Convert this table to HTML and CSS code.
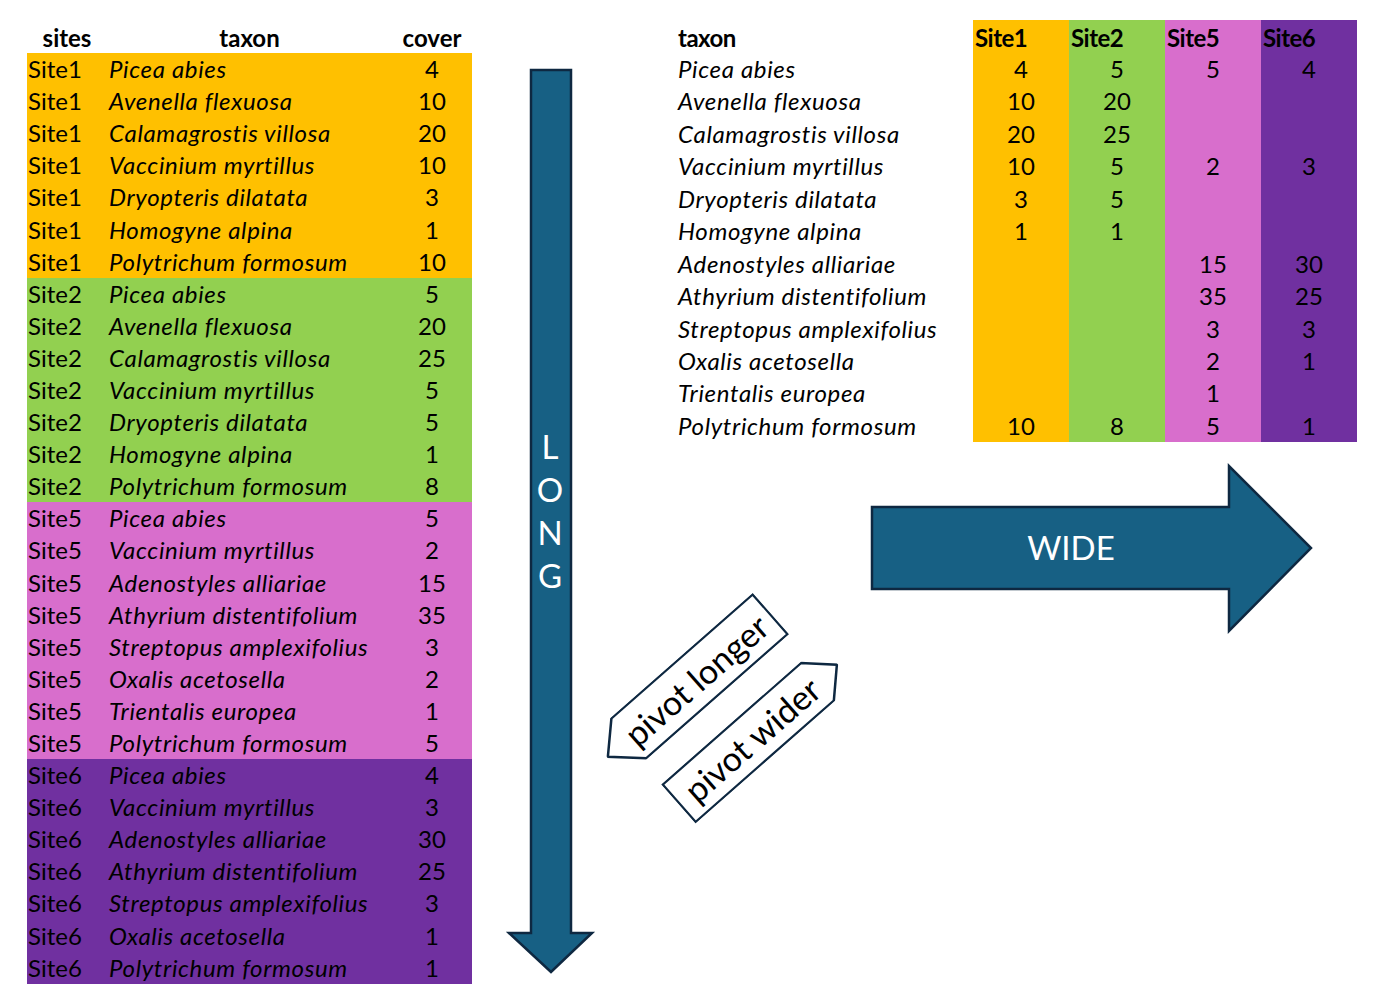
FILE: index.html
```html
<!DOCTYPE html>
<html>
<head>
<meta charset="utf-8">
<title>pivot longer / pivot wider</title>
<link rel="stylesheet" href="styles.css">
</head>
<body>
<div class="page">
  <div class="long-table">
    <div class="lrow head"><span>sites</span><span class="c">taxon</span><span class="c">cover</span></div>
    <div class="lrow s1"><span>Site1</span><i>Picea abies</i><span class="c">4</span></div>
    <div class="lrow s1"><span>Site1</span><i>Avenella flexuosa</i><span class="c">10</span></div>
    <div class="lrow s1"><span>Site1</span><i>Calamagrostis villosa</i><span class="c">20</span></div>
    <div class="lrow s1"><span>Site1</span><i>Vaccinium myrtillus</i><span class="c">10</span></div>
    <div class="lrow s1"><span>Site1</span><i>Dryopteris dilatata</i><span class="c">3</span></div>
    <div class="lrow s1"><span>Site1</span><i>Homogyne alpina</i><span class="c">1</span></div>
    <div class="lrow s1"><span>Site1</span><i>Polytrichum formosum</i><span class="c">10</span></div>
    <div class="lrow s2"><span>Site2</span><i>Picea abies</i><span class="c">5</span></div>
    <div class="lrow s2"><span>Site2</span><i>Avenella flexuosa</i><span class="c">20</span></div>
    <div class="lrow s2"><span>Site2</span><i>Calamagrostis villosa</i><span class="c">25</span></div>
    <div class="lrow s2"><span>Site2</span><i>Vaccinium myrtillus</i><span class="c">5</span></div>
    <div class="lrow s2"><span>Site2</span><i>Dryopteris dilatata</i><span class="c">5</span></div>
    <div class="lrow s2"><span>Site2</span><i>Homogyne alpina</i><span class="c">1</span></div>
    <div class="lrow s2"><span>Site2</span><i>Polytrichum formosum</i><span class="c">8</span></div>
    <div class="lrow s5"><span>Site5</span><i>Picea abies</i><span class="c">5</span></div>
    <div class="lrow s5"><span>Site5</span><i>Vaccinium myrtillus</i><span class="c">2</span></div>
    <div class="lrow s5"><span>Site5</span><i>Adenostyles alliariae</i><span class="c">15</span></div>
    <div class="lrow s5"><span>Site5</span><i>Athyrium distentifolium</i><span class="c">35</span></div>
    <div class="lrow s5"><span>Site5</span><i>Streptopus amplexifolius</i><span class="c">3</span></div>
    <div class="lrow s5"><span>Site5</span><i>Oxalis acetosella</i><span class="c">2</span></div>
    <div class="lrow s5"><span>Site5</span><i>Trientalis europea</i><span class="c">1</span></div>
    <div class="lrow s5"><span>Site5</span><i>Polytrichum formosum</i><span class="c">5</span></div>
    <div class="lrow s6"><span>Site6</span><i>Picea abies</i><span class="c">4</span></div>
    <div class="lrow s6"><span>Site6</span><i>Vaccinium myrtillus</i><span class="c">3</span></div>
    <div class="lrow s6"><span>Site6</span><i>Adenostyles alliariae</i><span class="c">30</span></div>
    <div class="lrow s6"><span>Site6</span><i>Athyrium distentifolium</i><span class="c">25</span></div>
    <div class="lrow s6"><span>Site6</span><i>Streptopus amplexifolius</i><span class="c">3</span></div>
    <div class="lrow s6"><span>Site6</span><i>Oxalis acetosella</i><span class="c">1</span></div>
    <div class="lrow s6"><span>Site6</span><i>Polytrichum formosum</i><span class="c">1</span></div>
  </div>

  <div class="wide-table">
    <div class="wrow head"><span class="tx">taxon</span><span class="s1">Site1</span><span class="s2">Site2</span><span class="s5">Site5</span><span class="s6">Site6</span></div>
    <div class="wrow"><i class="tx">Picea abies</i><span class="s1">4</span><span class="s2">5</span><span class="s5">5</span><span class="s6">4</span></div>
    <div class="wrow"><i class="tx">Avenella flexuosa</i><span class="s1">10</span><span class="s2">20</span><span class="s5"></span><span class="s6"></span></div>
    <div class="wrow"><i class="tx">Calamagrostis villosa</i><span class="s1">20</span><span class="s2">25</span><span class="s5"></span><span class="s6"></span></div>
    <div class="wrow"><i class="tx">Vaccinium myrtillus</i><span class="s1">10</span><span class="s2">5</span><span class="s5">2</span><span class="s6">3</span></div>
    <div class="wrow"><i class="tx">Dryopteris dilatata</i><span class="s1">3</span><span class="s2">5</span><span class="s5"></span><span class="s6"></span></div>
    <div class="wrow"><i class="tx">Homogyne alpina</i><span class="s1">1</span><span class="s2">1</span><span class="s5"></span><span class="s6"></span></div>
    <div class="wrow"><i class="tx">Adenostyles alliariae</i><span class="s1"></span><span class="s2"></span><span class="s5">15</span><span class="s6">30</span></div>
    <div class="wrow"><i class="tx">Athyrium distentifolium</i><span class="s1"></span><span class="s2"></span><span class="s5">35</span><span class="s6">25</span></div>
    <div class="wrow"><i class="tx">Streptopus amplexifolius</i><span class="s1"></span><span class="s2"></span><span class="s5">3</span><span class="s6">3</span></div>
    <div class="wrow"><i class="tx">Oxalis acetosella</i><span class="s1"></span><span class="s2"></span><span class="s5">2</span><span class="s6">1</span></div>
    <div class="wrow"><i class="tx">Trientalis europea</i><span class="s1"></span><span class="s2"></span><span class="s5">1</span><span class="s6"></span></div>
    <div class="wrow"><i class="tx">Polytrichum formosum</i><span class="s1">10</span><span class="s2">8</span><span class="s5">5</span><span class="s6">1</span></div>
  </div>

  <svg class="shapes" width="1376" height="1003" viewBox="0 0 1376 1003">
    <polygon class="arrow" points="531,70 571,70 571,933 592,933 551,972 509,933 531,933"/>
    <text class="arrow-text" x="550" y="459">L</text>
    <text class="arrow-text" x="550" y="502">O</text>
    <text class="arrow-text" x="550" y="545">N</text>
    <text class="arrow-text" x="550" y="588">G</text>
    <polygon class="arrow" points="872,507 1229,507 1229,466 1311,548 1229,631 1229,589 872,589"/>
    <text class="arrow-text" x="1071" y="560">WIDE</text>
  </svg>

  <div class="tag tag-longer">
    <svg class="tag-shape" width="218" height="55" viewBox="0 0 218 55"><polygon points="29,1 217,1 217,54 29,54 1,27.5"/></svg>
    <span class="tag-text">pivot longer</span>
  </div>
  <div class="tag tag-wider">
    <svg class="tag-shape" width="212" height="52" viewBox="0 0 212 52"><polygon points="1,1 185,1 211,26 185,51 1,51"/></svg>
    <span class="tag-text">pivot wider</span>
  </div>
</div>
</body>
</html>
```

FILE: styles.css
```css
html, body {
  margin: 0;
  padding: 0;
  background: #ffffff;
}

.page {
  position: relative;
  width: 1376px;
  height: 1003px;
  display: flex;
  align-items: flex-start;
  gap: 204px;
  padding: 20px 0 0 27px;
  box-sizing: border-box;
  font-family: Lato, "Open Sans", sans-serif;
  font-size: 24px;
  color: #000;
  overflow: hidden;
}

i {
  letter-spacing: 0.65px;
}

.long-table {
  display: flex;
  flex-direction: column;
  width: 445px;
}

.lrow {
  display: grid;
  grid-template-columns: 80px 285px 80px;
  height: 32.1px;
  align-items: center;
  line-height: 30px;
  white-space: nowrap;
}

.lrow > span:first-child { padding-left: 1px; }
.lrow > i { padding-left: 2px; }
.lrow .c { text-align: center; }

.lrow.head {
  height: 33px;
  align-items: end;
  font-weight: bold;
}
.lrow.head > span:first-child { text-align: center; padding-left: 0; }

.s1 { background: #ffc000; }
.s2 { background: #92d050; }
.s5 { background: #d86ecc; }
.s6 { background: #7030a0; }

.wide-table {
  display: flex;
  flex-direction: column;
  width: 681px;
}

.wrow {
  display: grid;
  grid-template-columns: 297px 96px 96px 96px 96px;
  height: 32.45px;
  line-height: 33px;
  white-space: nowrap;
}

.wrow > span { text-align: center; }
.wrow .tx { padding-left: 2px; }

.wrow.head {
  height: 32px;
  line-height: 30px;
  font-weight: bold;
}
.wrow.head > span {
  text-align: left;
  padding-left: 2px;
  padding-top: 3px;
  letter-spacing: -0.5px;
}
.wrow.head > .tx { padding-left: 2px; }

.shapes {
  position: absolute;
  left: 0;
  top: 0;
  pointer-events: none;
}

.arrow {
  fill: #176084;
  stroke: #0e2841;
  stroke-width: 2.5;
  stroke-linejoin: miter;
}

.arrow-text {
  fill: #ffffff;
  font-family: Lato, "Open Sans", sans-serif;
  font-size: 33px;
  text-anchor: middle;
}

.tag {
  position: absolute;
  display: flex;
  align-items: center;
  justify-content: center;
}

.tag-shape {
  position: absolute;
  left: 0;
  top: 0;
}

.tag-shape polygon {
  fill: #ffffff;
  stroke: #0e2841;
  stroke-width: 2.5;
}

.tag-text {
  position: relative;
  font-family: Lato, "Open Sans", sans-serif;
  font-size: 34px;
  line-height: 40px;
  white-space: nowrap;
}

.tag-longer {
  width: 218px;
  height: 55px;
  left: 580px;
  top: 658px;
  transform: rotate(-41.3deg);
}
.tag-longer .tag-text { padding-left: 18px; }

.tag-wider {
  width: 212px;
  height: 52px;
  left: 652px;
  top: 708px;
  transform: rotate(-41.3deg);
}
.tag-wider .tag-text { padding-right: 16px; }
```
